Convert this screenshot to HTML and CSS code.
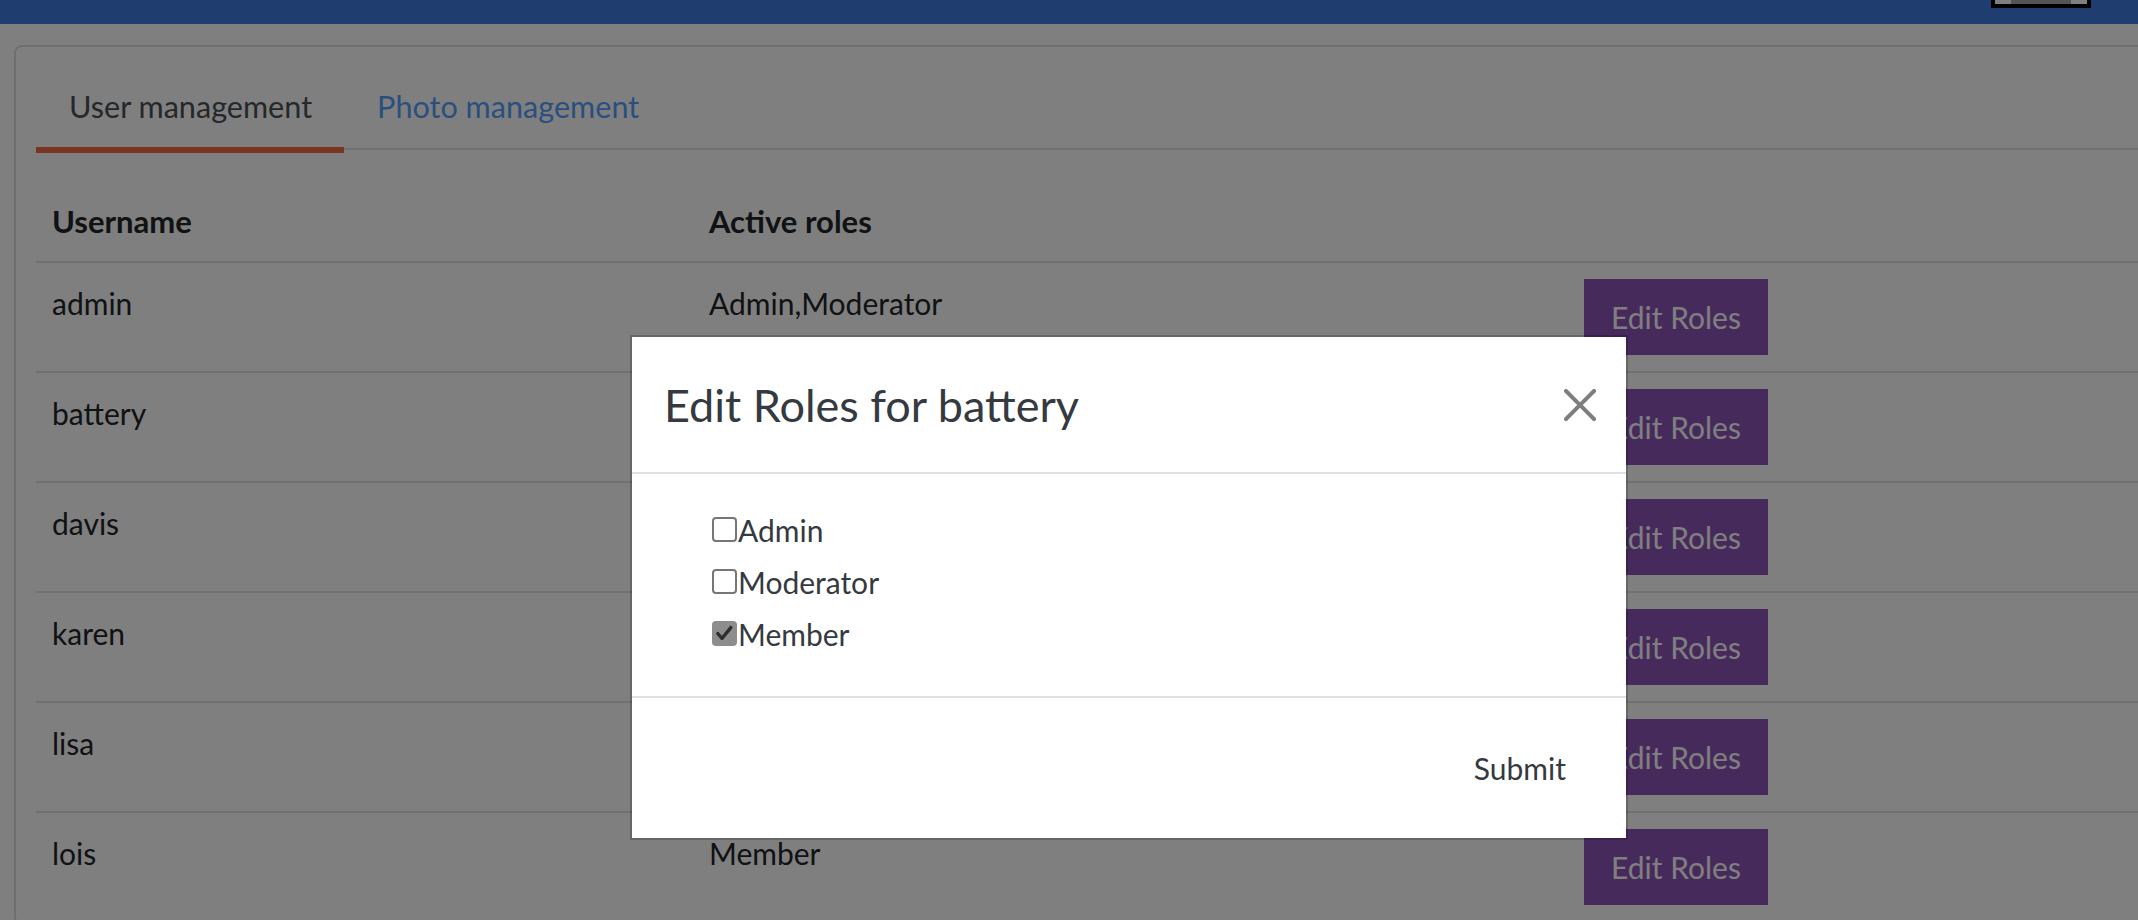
FILE: index.html
```html
<!DOCTYPE html>
<html lang="en">
<head>
<meta charset="utf-8">
<title>Admin</title>
<link rel="stylesheet" href="styles.css">
</head>
<body>
<header class="navbar">
  <div class="avatar"><span class="avatar-core"></span></div>
</header>
<main class="page">
  <section class="card">
    <nav class="tabs">
      <a class="tab tab-active">User management</a>
      <a class="tab tab-link">Photo management</a>
    </nav>
    <table class="users">
      <colgroup><col class="c1"><col class="c2"><col></colgroup>
      <thead>
        <tr><th>Username</th><th>Active roles</th><th></th></tr>
      </thead>
      <tbody>
        <tr><td>admin</td><td>Admin,Moderator</td><td><button class="btn-edit">Edit Roles</button></td></tr>
        <tr><td>battery</td><td></td><td><button class="btn-edit">Edit Roles</button></td></tr>
        <tr><td>davis</td><td></td><td><button class="btn-edit">Edit Roles</button></td></tr>
        <tr><td>karen</td><td></td><td><button class="btn-edit">Edit Roles</button></td></tr>
        <tr><td>lisa</td><td></td><td><button class="btn-edit">Edit Roles</button></td></tr>
        <tr><td>lois</td><td>Member</td><td><button class="btn-edit">Edit Roles</button></td></tr>
      </tbody>
    </table>
  </section>
</main>
<div class="backdrop"></div>
<div class="modal">
  <div class="modal-header">
    <h4 class="modal-title">Edit Roles for battery</h4>
    <button class="btn-close" aria-label="Close">
      <svg viewBox="0 0 16 16" width="32" height="32"><path d="M.293.293a1 1 0 0 1 1.414 0L8 6.586 14.293.293a1 1 0 1 1 1.414 1.414L9.414 8l6.293 6.293a1 1 0 0 1-1.414 1.414L8 9.414l-6.293 6.293a1 1 0 0 1-1.414-1.414L6.586 8 .293 1.707a1 1 0 0 1 0-1.414z"/></svg>
    </button>
  </div>
  <div class="modal-body">
    <label class="role"><span class="box"></span>Admin</label>
    <label class="role"><span class="box"></span>Moderator</label>
    <label class="role"><span class="box box-checked"><svg viewBox="0 0 25 25" width="21" height="21"><path d="M4.5 12.5 L9.5 18.5 L20 5.5" fill="none" stroke="#2e2e2e" stroke-width="4" stroke-linecap="round" stroke-linejoin="round"/></svg></span>Member</label>
  </div>
  <div class="modal-footer">
    <button class="btn-submit">Submit</button>
  </div>
</div>
</body>
</html>
```
FILE: styles.css
```css
html, body {
  margin: 0;
  padding: 0;
}
body {
  width: 2138px;
  height: 920px;
  overflow: hidden;
  background: #ffffff;
  font-family: "Lato", "Open Sans", sans-serif;
  font-size: 30px;
  line-height: 48px;
  color: #212529;
}
.navbar {
  height: 24px;
  background: #3e7adc;
  display: flex;
  justify-content: flex-end;
  padding-right: 47px;
}
.avatar {
  box-sizing: border-box;
  width: 100px;
  height: 8px;
  border: 4px solid #000;
  border-top: 0;
  background: #ffffff;
  display: flex;
  justify-content: center;
}
.avatar-core {
  width: 60px;
  background: #aaaaaa;
}
.page {
  padding: 21px 0 0 14px;
}
.card {
  width: 2300px;
  border: 2px solid #dfdfdf;
  border-radius: 8px;
  padding: 20px 20px 0 20px;
  background: #fff;
}
.tabs {
  display: flex;
  border-bottom: 2px solid #dee2e6;
  height: 81px;
  align-items: flex-start;
}
.tab {
  display: block;
  font-size: 30.6px;
  padding: 16px 32px 16px 33px;
  border-bottom: 6px solid transparent;
  margin-bottom: -5px;
  cursor: pointer;
}
.tab-active {
  color: #495057;
  border-bottom-color: #f46a40;
}
.tab-link {
  color: #559fff;
}
.users {
  margin-top: 31px;
  border-collapse: collapse;
  table-layout: fixed;
  width: 2260px;
}
.c1 { width: 657px; }
.c2 { width: 875px; }
.users th,
.users td {
  text-align: left;
  vertical-align: top;
  padding: 16px;
  border-bottom: 2px solid #dee2e6;
  color: #212529;
}
.users th {
  font-weight: 700;
  font-size: 31px;
}
.btn-edit {
  font: inherit;
  line-height: 48px;
  padding: 12px 25px;
  border: 2px solid #8e54b8;
  background: #8e54b8;
  color: #ffffff;
  border-radius: 0;
}
.backdrop {
  position: fixed;
  inset: 0;
  background: rgba(0, 0, 0, 0.5);
}
.modal {
  position: fixed;
  left: 630px;
  top: 335px;
  width: 998px;
  box-sizing: border-box;
  background: #ffffff;
  border: 2px solid rgba(0, 0, 0, 0.2);
  background-clip: padding-box;
}
.modal-header {
  display: flex;
  align-items: center;
  justify-content: space-between;
  padding: 32px 32px 31px 32px;
  border-bottom: 2px solid #dee2e6;
}
.modal-title {
  margin: 0;
  font-size: 45px;
  line-height: 72px;
  font-weight: 400;
  color: #343a40;
}
.btn-close {
  border: 0;
  background: transparent;
  padding: 0;
  width: 32px;
  height: 32px;
  margin-right: -2px;
  opacity: 0.5;
}
.btn-close svg {
  display: block;
  fill: #000;
}
.modal-body {
  padding: 32px 32px 34px 80px;
}
.role {
  display: block;
  height: 48px;
  margin-bottom: 4px;
  color: #343a40;
}
.box {
  display: inline-block;
  box-sizing: border-box;
  width: 25px;
  height: 25px;
  border: 2px solid #767676;
  border-radius: 4px;
  background: #fff;
  vertical-align: baseline;
  overflow: hidden;
  margin-right: 1px;
}
.box-checked {
  background: #8d8d8d;
  border-color: #8d8d8d;
}
.box-checked svg {
  display: block;
}
.modal-footer {
  display: flex;
  justify-content: flex-end;
  padding: 24px 26px 24px 24px;
  border-top: 2px solid #dee2e6;
}
.btn-submit {
  font: inherit;
  line-height: 48px;
  margin: 8px;
  padding: 12px 24px;
  border: 2px solid transparent;
  background: transparent;
  color: #343a40;
}
```
